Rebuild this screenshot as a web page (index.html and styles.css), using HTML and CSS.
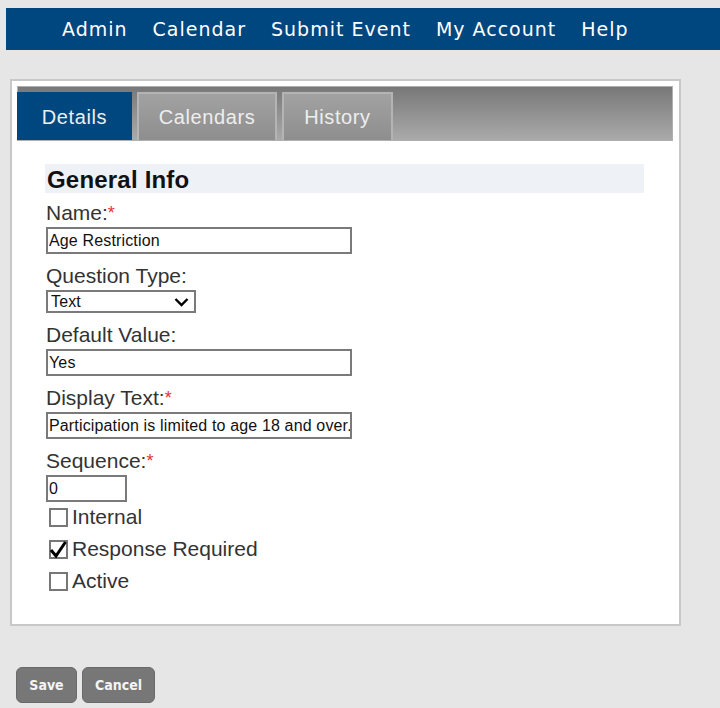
FILE: index.html
```html
<!DOCTYPE html>
<html>
<head>
<meta charset="utf-8">
<link rel="stylesheet" href="styles.css">
</head>
<body>
<nav class="topnav">
  <a>Admin</a><a>Calendar</a><a>Submit Event</a><a>My Account</a><a>Help</a>
</nav>
<div class="panel">
  <div class="tabstrip">
    <div class="tab active">Details</div>
    <div class="tab">Calendars</div>
    <div class="tab">History</div>
  </div>
  <div class="content">
    <h2 class="section">General Info</h2>
    <div class="field first">
      <label>Name:<span class="req">*</span></label>
      <div class="input wide">Age Restriction</div>
    </div>
    <div class="field">
      <label>Question Type:</label>
      <div class="select">Text<svg class="chev" width="15" height="10" viewBox="0 0 15 10"><path d="M1.5 2 L7.5 8 L13.5 2" fill="none" stroke="#000" stroke-width="2.4"/></svg></div>
    </div>
    <div class="field">
      <label>Default Value:</label>
      <div class="input wide">Yes</div>
    </div>
    <div class="field">
      <label>Display Text:<span class="req">*</span></label>
      <div class="input wide">Participation is limited to age 18 and over.</div>
    </div>
    <div class="field">
      <label>Sequence:<span class="req">*</span></label>
      <div class="input short">0</div>
    </div>
    <div class="checks">
      <div class="check"><span class="box"></span>Internal</div>
      <div class="check"><span class="box"><svg width="19" height="19" viewBox="0 0 19 19"><path d="M2 10 L7 16 L16.5 2" fill="none" stroke="#000" stroke-width="3"/></svg></span>Response Required</div>
      <div class="check"><span class="box"></span>Active</div>
    </div>
  </div>
</div>
<div class="buttons">
  <button class="btn">Save</button><button class="btn">Cancel</button>
</div>
</body>
</html>
```
FILE: styles.css
```css
html, body { margin: 0; padding: 0; }
body {
  background: #e6e6e6;
  width: 720px;
  height: 708px;
  overflow: hidden;
  font-family: "Liberation Sans", Arial, sans-serif;
}
.topnav {
  margin: 8px 0 0 6px;
  height: 42px;
  background: #00467f;
  display: flex;
  align-items: center;
  padding-left: 56px;
  font-family: "DejaVu Sans", Verdana, sans-serif;
  font-size: 19px;
  letter-spacing: 1px;
  color: #fff;
}
.topnav a { margin-right: 25px; }
.panel {
  margin: 29px 0 0 10px;
  width: 671px;
  height: 547px;
  background: #fff;
  border: 2px solid #c8c8c8;
  padding: 5px 6px 0 5px;
  box-sizing: border-box;
}
.tabstrip {
  height: 55px;
  background: linear-gradient(#787878, #aaaaaa);
  border: 1px solid #b0b0b0;
  display: flex;
  align-items: flex-end;
  gap: 5px;
  box-sizing: border-box;
}
.tab {
  height: 48px;
  box-sizing: border-box;
  display: flex;
  align-items: center;
  justify-content: center;
  font-size: 20px;
  letter-spacing: 0.6px;
  color: #eee;
  background: linear-gradient(#a2a2a2, #8e8e8e);
  border: 2px solid #b4b4b4;
  border-bottom: none;
}
.tab.active { background: #00467f; border-color: #00467f; width: 115px; margin-left: -1px; }
.tab:nth-child(2) { width: 140px; }
.tab:nth-child(3) { width: 111px; }
.content { padding: 23px 0 0 28px; }
.section {
  margin: 0;
  width: 599px;
  height: 29px;
  background: #eef2f6;
  font-size: 24px;
  letter-spacing: 0.2px;
  font-weight: bold;
  color: #111;
  line-height: 31px;
  padding-left: 2px;
  box-sizing: border-box;
}
.field { margin-top: 10px; padding-left: 1px; }
.field.first { margin-top: 8px; }
.field label {
  display: block;
  font-size: 21px;
  color: #333;
  line-height: 24px;
}
.req { color: #e8303a; font-size: 18px; vertical-align: top; }
.input, .select {
  margin-top: 2px;
  height: 27px;
  box-sizing: border-box;
  border: 2px solid #7a7a7a;
  font-size: 16px;
  letter-spacing: 0.15px;
  color: #111;
  padding: 0 1px;
  line-height: 23px;
  background: #fff;
  white-space: nowrap;
  overflow: hidden;
}
.wide { width: 306px; }
.short { width: 81px; }
.select {
  width: 150px;
  height: 23px;
  line-height: 19px;
  margin-bottom: 2px;
  display: flex;
  justify-content: space-between;
  align-items: center;
  padding: 0 5px 0 3px;
}
.checks { margin-top: -1px; padding-left: 4px; }
.check {
  display: flex;
  align-items: center;
  height: 32px;
  font-size: 21px;
  color: #333;
}
.box {
  width: 19px;
  height: 19px;
  box-sizing: border-box;
  border: 2px solid #777;
  margin-right: 4px;
  display: flex;
  align-items: center;
  justify-content: center;
}
.box svg { flex: none; }
.buttons { margin: 41px 0 0 16px; display: flex; gap: 5px; }
.btn {
  height: 36px;
  background: #777;
  border: 1px solid #6a6a6a;
  border-radius: 6px;
  color: #f4f4f4;
  font-family: "DejaVu Sans Condensed", "DejaVu Sans", sans-serif;
  font-size: 14px;
  font-weight: bold;
  padding: 0;
}
.btn:first-child { width: 61px; }
.btn:last-child { width: 73px; }
```
